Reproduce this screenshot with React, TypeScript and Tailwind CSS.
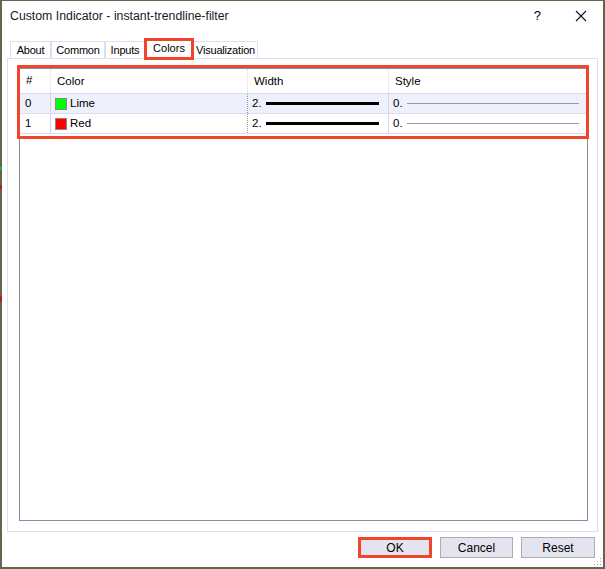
const FONT = { fontFamily: '"Liberation Sans", Arial, sans-serif' }

const rows = [
  { id: '0', name: 'Lime', swatch: 'bg-[#00ff00]', selected: true },
  { id: '1', name: 'Red', swatch: 'bg-[#ff0000]', selected: false },
]

const tabs = [
  { label: 'About', w: 'w-[41px]' },
  { label: 'Common', w: 'w-[54px]' },
  { label: 'Inputs', w: 'w-[40px]' },
  { label: 'Colors', w: 'w-[46px]', active: true },
  { label: 'Visualization', w: 'w-[65px]' },
]

function Tab({ label, w, active }: { label: string; w: string; active?: boolean }) {
  if (active) {
    return (
      <div className={`relative z-10 -mb-px mx-[1px] flex h-[20px] items-center justify-center border border-b-0 border-[#dcdcf4] bg-white pb-[2px] ${w}`}>
        {label}
        <span className="pointer-events-none absolute -inset-x-[3px] -top-[2px] -bottom-[1px] border-[3px] border-[#f0452d]" />
      </div>
    )
  }
  return (
    <div className={`flex h-[17px] items-center justify-center border border-b-0 border-[#dcdcf4] tracking-[-0.2px] ${w}`}>
      {label}
    </div>
  )
}

export default function App() {
  return (
    <div
      className="relative flex h-[569px] w-[605px] flex-col border-x-2 border-b-2 border-t border-[#62654a] bg-white text-[12px] text-black"
      style={FONT}
    >
      {/* chart bits peeking out on the left */}
      <span className="absolute -left-[2px] top-[166px] h-[3px] w-[2px] bg-[#2bb52b]" />
      <span className="absolute -left-[2px] top-[184px] h-[4px] w-[2px] bg-[#b02020]" />
      <span className="absolute -left-[2px] top-[295px] h-[6px] w-[2px] bg-[#b02020]" />

      {/* title bar */}
      <div className="flex h-[30px] items-center justify-between pl-[8px]">
        <span className="text-[12.3px] text-[#1a1a1a]">Custom Indicator - instant-trendline-filter</span>
        <div className="flex items-center">
          <span className="mr-[34px] text-[13px]">?</span>
          <svg width="12" height="12" viewBox="0 0 12 12" className="mr-[16px]">
            <path d="M1 1 L11 11 M11 1 L1 11" stroke="#111" strokeWidth="1.1" />
          </svg>
        </div>
      </div>

      {/* tabs */}
      <div className="ml-[7px] mt-[8px] flex items-end pl-[1px] text-[11px]">
        {tabs.map((t) => (
          <Tab key={t.label} label={t.label} w={t.w} active={t.active} />
        ))}
      </div>

      {/* tab panel */}
      <div className="ml-[5px] mr-[5px] flex h-[474px] flex-col border border-[#dcdcf4] pb-[10px] pl-[11px] pr-[9px] pt-[9px]">
        <div className="relative flex flex-1 flex-col border border-[#868ca6] text-[11.5px]">
          {/* header */}
          <div className="flex h-[25px] items-center border-b border-[#dcdcee]">
            <div className="w-[30px] pl-[6px]">#</div>
            <div className="h-full w-[197px] border-l border-dotted border-[#d8d8ee] pl-[6px] leading-[25px]">Color</div>
            <div className="h-full w-[141px] border-l border-dotted border-[#d8d8ee] pl-[6px] leading-[25px]">Width</div>
            <div className="h-full flex-1 border-l border-dotted border-[#d8d8ee] pl-[6px] leading-[25px]">Style</div>
          </div>
          {rows.map((r) => (
            <div
              key={r.id}
              className={`flex h-[20px] items-center border-b border-[#dcdcee] ${r.selected ? 'bg-[#eef0fb]' : ''}`}
            >
              <div className="w-[30px] pl-[5px]">{r.id}</div>
              <div className="flex h-full w-[197px] items-center border-l border-[#d4d4ea] pl-[4px]">
                <span className={`mr-[3px] h-[12px] w-[12px] border border-[#888] ${r.swatch}`} />
                {r.name}
              </div>
              <div className="flex h-full w-[141px] items-center gap-[4px] border-l border-dotted border-[#9a9aaa] pl-[4px]">
                2.
                <div className="h-[3px] w-[113px] bg-black" />
              </div>
              <div className="flex h-full flex-1 items-center gap-[4px] border-l border-[#d4d4ea] pl-[4px]">
                0.
                <div className="h-px w-[172px] bg-[#9a9aaa]" />
              </div>
            </div>
          ))}
          <span className="pointer-events-none absolute -left-[3px] -right-[2px] -top-[4px] h-[74px] border-[3px] border-[#f0452d]" />
        </div>
      </div>

      {/* buttons */}
      <div className="mr-[8px] mt-[5px] flex justify-end gap-[8px] text-[12px]">
        <button className="relative h-[21px] w-[74px] border border-[#adadad] bg-[#e4e4f0]">
          OK
          <span className="pointer-events-none absolute -inset-px border-[3px] border-[#f0452d]" />
        </button>
        <button className="h-[21px] w-[73px] border border-[#adadad] bg-[#e4e4f0]">Cancel</button>
        <button className="h-[21px] w-[74px] border border-[#adadad] bg-[#e4e4f0]">Reset</button>
      </div>

      {/* size grip */}
      <svg width="8" height="8" viewBox="0 0 8 8" className="absolute bottom-[1px] right-[1px]">
        <g fill="#a0a0a0">
          <rect x="6" y="0" width="1" height="1" />
          <rect x="3" y="3" width="1" height="1" />
          <rect x="6" y="3" width="1" height="1" />
          <rect x="0" y="6" width="1" height="1" />
          <rect x="3" y="6" width="1" height="1" />
          <rect x="6" y="6" width="1" height="1" />
        </g>
      </svg>
    </div>
  )
}
